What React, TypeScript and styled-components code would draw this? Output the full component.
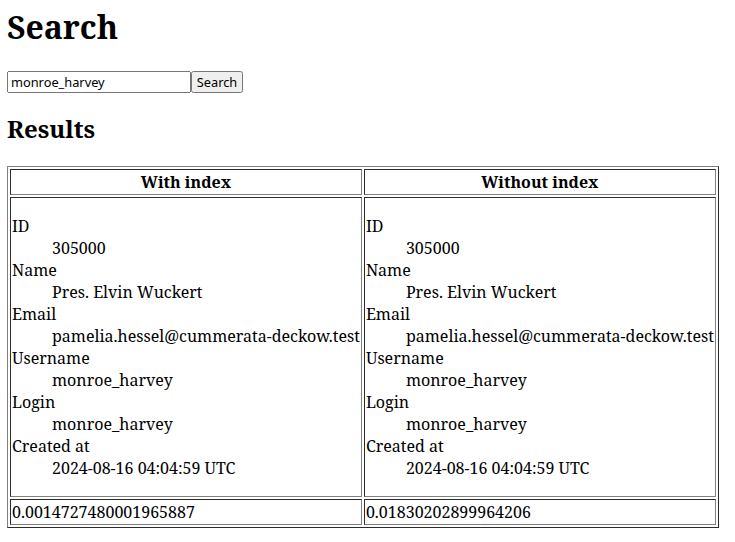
import React from 'react';
import styled, { createGlobalStyle } from 'styled-components';

const GlobalStyle = createGlobalStyle`
  body {
    margin: 8px 8px 8px 7px;
    font-family: "Noto Serif", serif;
    font-size: 16px;
    color: #000;
    background: #fff;
  }
`;

const Title = styled.h1`
  font-size: 2em;
  font-weight: bold;
  line-height: 1.2;
  margin: 0 0 25px;
`;

const SearchForm = styled.form`
  margin: 0;
  display: flex;
  align-items: center;
`;

const SearchInput = styled.input`
  box-sizing: border-box;
  width: 184px;
  height: 22px;
  font-family: "Noto Sans", sans-serif;
  font-size: 12.8px;
`;

const SearchButton = styled.button`
  box-sizing: border-box;
  width: 52px;
  height: 22px;
  padding: 0;
  font-family: "Noto Sans", sans-serif;
  font-size: 12.8px;
`;

const Subtitle = styled.h2`
  font-size: 1.5em;
  font-weight: bold;
  line-height: 1.36;
  margin: 20px 0;
`;

const ResultsTable = styled.table`
  border: 1px outset #808080;
  border-spacing: 2px;
  border-collapse: separate;
`;

const HeadCell = styled.th`
  border: 1px inset #808080;
  padding: 1px;
  font-weight: bold;
`;

const Cell = styled.td`
  border: 1px inset #808080;
  padding: 1px;
  vertical-align: middle;
`;

const Details = styled.dl`
  margin: 1em 0;
`;

const Term = styled.dt``;

const Value = styled.dd`
  margin-left: 40px;
`;

type Row = { label: string; value: string };

const rows: Row[] = [
  { label: 'ID', value: '305000' },
  { label: 'Name', value: 'Pres. Elvin Wuckert' },
  { label: 'Email', value: 'pamelia.hessel@cummerata-deckow.test' },
  { label: 'Username', value: 'monroe_harvey' },
  { label: 'Login', value: 'monroe_harvey' },
  { label: 'Created at', value: '2024-08-16 04:04:59 UTC' },
];

const UserDetails: React.FC = () => (
  <Details>
    {rows.map((r) => (
      <React.Fragment key={r.label}>
        <Term>{r.label}</Term>
        <Value>{r.value}</Value>
      </React.Fragment>
    ))}
  </Details>
);

export default function App() {
  return (
    <>
      <GlobalStyle />
      <Title>Search</Title>
      <SearchForm onSubmit={(e) => e.preventDefault()}>
        <SearchInput type="text" defaultValue="monroe_harvey" />
        <SearchButton type="submit">Search</SearchButton>
      </SearchForm>
      <Subtitle>Results</Subtitle>
      <ResultsTable>
        <thead>
          <tr>
            <HeadCell>With index</HeadCell>
            <HeadCell>Without index</HeadCell>
          </tr>
        </thead>
        <tbody>
          <tr>
            <Cell><UserDetails /></Cell>
            <Cell><UserDetails /></Cell>
          </tr>
          <tr>
            <Cell>0.0014727480001965887</Cell>
            <Cell>0.01830202899964206</Cell>
          </tr>
        </tbody>
      </ResultsTable>
    </>
  );
}
